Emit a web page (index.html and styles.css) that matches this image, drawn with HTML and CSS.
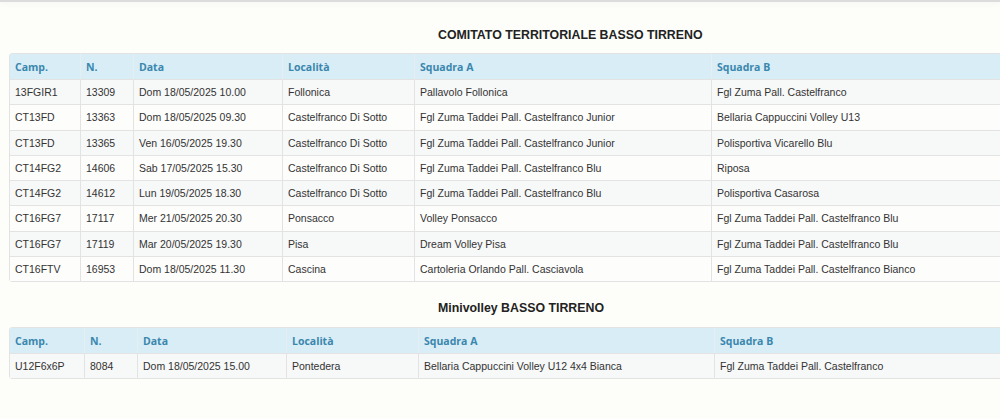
FILE: index.html
```html
<!DOCTYPE html>
<html lang="it">
<head>
<meta charset="utf-8">
<title>Gare</title>
<link rel="stylesheet" href="styles.css">
</head>
<body>
<div class="topbar"></div>
<div class="page">
  <h3 class="title t1">COMITATO TERRITORIALE BASSO TIRRENO</h3>
  <table class="grid g1">
    <colgroup><col class="c1"><col class="c2"><col class="c3"><col class="c4"><col class="c5"><col></colgroup>
    <thead><tr><th>Camp.</th><th>N.</th><th>Data</th><th>Località</th><th>Squadra A</th><th>Squadra B</th></tr></thead>
    <tbody>
      <tr><td>13FGIR1</td><td>13309</td><td>Dom 18/05/2025 10.00</td><td>Follonica</td><td>Pallavolo Follonica</td><td>Fgl Zuma Pall. Castelfranco</td></tr>
      <tr><td>CT13FD</td><td>13363</td><td>Dom 18/05/2025 09.30</td><td>Castelfranco Di Sotto</td><td>Fgl Zuma Taddei Pall. Castelfranco Junior</td><td>Bellaria Cappuccini Volley U13</td></tr>
      <tr><td>CT13FD</td><td>13365</td><td>Ven 16/05/2025 19.30</td><td>Castelfranco Di Sotto</td><td>Fgl Zuma Taddei Pall. Castelfranco Junior</td><td>Polisportiva Vicarello Blu</td></tr>
      <tr><td>CT14FG2</td><td>14606</td><td>Sab 17/05/2025 15.30</td><td>Castelfranco Di Sotto</td><td>Fgl Zuma Taddei Pall. Castelfranco Blu</td><td>Riposa</td></tr>
      <tr><td>CT14FG2</td><td>14612</td><td>Lun 19/05/2025 18.30</td><td>Castelfranco Di Sotto</td><td>Fgl Zuma Taddei Pall. Castelfranco Blu</td><td>Polisportiva Casarosa</td></tr>
      <tr><td>CT16FG7</td><td>17117</td><td>Mer 21/05/2025 20.30</td><td>Ponsacco</td><td>Volley Ponsacco</td><td>Fgl Zuma Taddei Pall. Castelfranco Blu</td></tr>
      <tr><td>CT16FG7</td><td>17119</td><td>Mar 20/05/2025 19.30</td><td>Pisa</td><td>Dream Volley Pisa</td><td>Fgl Zuma Taddei Pall. Castelfranco Blu</td></tr>
      <tr><td>CT16FTV</td><td>16953</td><td>Dom 18/05/2025 11.30</td><td>Cascina</td><td>Cartoleria Orlando Pall. Casciavola</td><td>Fgl Zuma Taddei Pall. Castelfranco Bianco</td></tr>
    </tbody>
  </table>
  <h3 class="title t2">Minivolley BASSO TIRRENO</h3>
  <table class="grid g2">
    <colgroup><col class="c1"><col class="c2"><col class="c3"><col class="c4"><col class="c5"><col></colgroup>
    <thead><tr><th>Camp.</th><th>N.</th><th>Data</th><th>Località</th><th>Squadra A</th><th>Squadra B</th></tr></thead>
    <tbody>
      <tr><td>U12F6x6P</td><td>8084</td><td>Dom 18/05/2025 15.00</td><td>Pontedera</td><td>Bellaria Cappuccini Volley U12 4x4 Bianca</td><td>Fgl Zuma Taddei Pall. Castelfranco</td></tr>
    </tbody>
  </table>
</div>
</body>
</html>
```

FILE: styles.css
```css
html, body {
  margin: 0;
  padding: 0;
  background: #fdfdf9;
  overflow: hidden;
}
body {
  font-family: "Liberation Sans", Arial, sans-serif;
  color: #333;
  width: 1000px;
  height: 418px;
  position: relative;
}
.topbar {
  height: 2px;
  background: #dcdcdc;
  box-shadow: 0 1px 6px rgba(0,0,0,0.08);
}
.page {
  padding: 0 0 0 9px;
  width: 1130px;
}
.title {
  margin: 0;
  font-size: 12.35px;
  font-weight: bold;
  color: #222;
  line-height: 14px;
  padding-left: 429px;
}
.t1 { padding-top: 26px; padding-bottom: 11px; }
.t2 { padding-top: 19px; padding-bottom: 12px; }
.grid {
  border-collapse: separate;
  border-spacing: 0;
  width: 1130px;
  table-layout: fixed;
  border: 1px solid #e3e3e3;
  border-radius: 3px;
  font-size: 10.5px;
}
.grid th {
  background: #d9edf7;
  color: #3a87ad;
  font-family: "Open Sans", "Liberation Sans", sans-serif;
  font-weight: bold;
  text-align: left;
  height: 25px;
  padding: 0 5px;
  border-left: 1px solid #e6eef2;
}
.grid td {
  height: 24.25px;
  padding: 0 5px;
  border-top: 1px solid #e3e3e3;
  border-left: 1px solid #e3e3e3;
  white-space: nowrap;
  line-height: 14px;
}
.grid th:first-child, .grid td:first-child { border-left: 0; }
.grid tbody tr:nth-child(odd) td { background: #f7f8f8; }
.grid tbody tr:nth-child(even) td { background: #fdfdfc; }
.g1 .c1 { width: 70px; }
.g1 .c2 { width: 53px; }
.g1 .c3 { width: 149px; }
.g1 .c4 { width: 132px; }
.g1 .c5 { width: 297px; }
.g2 .c1 { width: 74px; }
.g2 .c2 { width: 53px; }
.g2 .c3 { width: 149px; }
.g2 .c4 { width: 132px; }
.g2 .c5 { width: 296px; }
```
